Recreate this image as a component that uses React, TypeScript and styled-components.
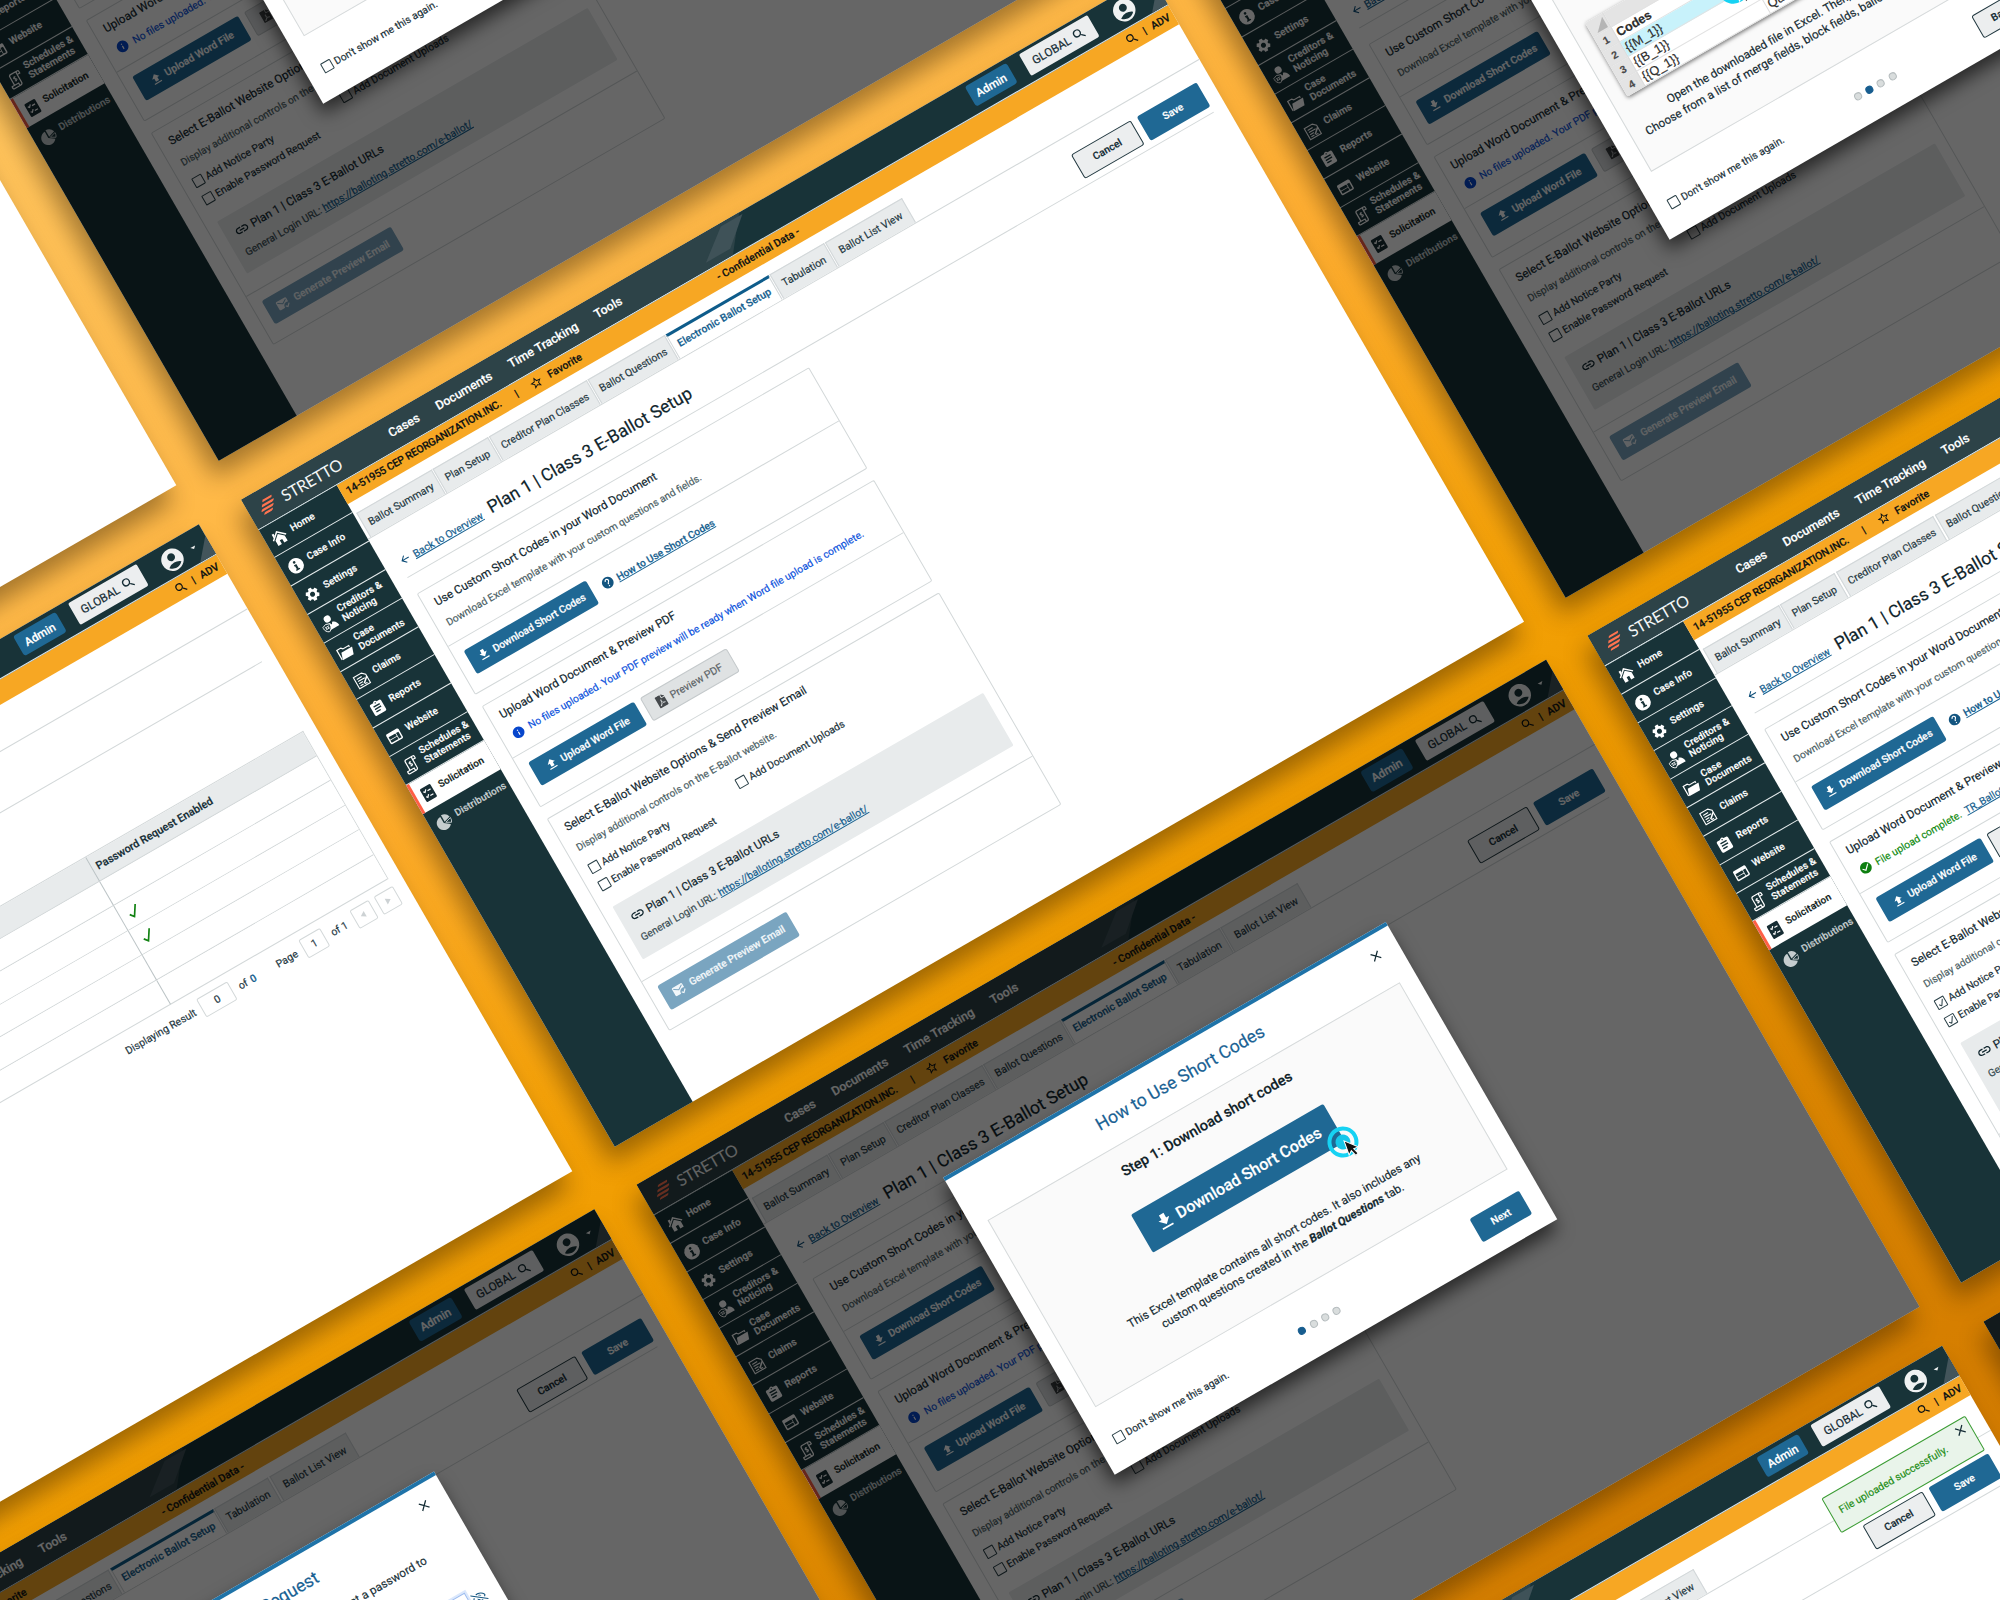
import React from 'react';
import styled, { createGlobalStyle, css } from 'styled-components';
import {
  MdFileDownload, MdFileUpload, MdHelp, MdCheckCircle, MdInfo, MdAccountCircle, MdStarBorder,
  MdSearch, MdLink, MdMarkEmailRead, MdSettings, MdAssignment, MdWeb, MdArrowBack,
  MdClose, MdArrowDropDown, MdPlayArrow,
} from 'react-icons/md';
import { FaFilePdf, FaRegEyeSlash } from 'react-icons/fa';

const c = {
  ink: '#132b34',
  soft: '#4c5f65',
  line: '#d3d8d9',
  blue: '#1f6894',
  link: '#155e8e',
  amber: '#f7a723',
  side: '#183338',
  grey: '#e8ebec',
};

const Global = createGlobalStyle`
  html, body { margin: 0; padding: 0; }
  body {
    overflow: hidden;
    font-family: Roboto, "Liberation Sans", sans-serif;
    color: ${c.ink};
    -webkit-text-stroke: 0.18px currentColor;
  }
  *, *::before, *::after { box-sizing: border-box; }
`;

const Stage = styled.div`
  width: 2000px;
  height: 1600px;
  overflow: hidden;
  background: linear-gradient(150deg, #ffc660 0%, #ffbb4c 20%, #ffae30 36%, #f5a20a 51%, #f19e03 56%, #dd8700 77%, #d67f00 89%, #d27a00 100%);
`;

const Board = styled.div`
  display: grid;
  grid-template-columns: repeat(3, 1050px);
  grid-template-rows: repeat(4, 747px);
  column-gap: 48.5px;
  row-gap: 44.5px;
  width: 3248px;
  transform-origin: 0 0;
  transform: translate(-1106.5px, 363.4px) rotate(-30deg);
`;

const Frame = styled.section<{ $col: number; $row: number }>`
  grid-column: ${(p) => p.$col};
  grid-row: ${(p) => p.$row};
  position: relative;
  display: flex;
  flex-direction: column;
  background: #fff;
  box-shadow: -11px 13px 24px rgba(40, 25, 0, 0.42);
`;

const Dim = styled.div`
  position: absolute;
  inset: 0;
  background: rgba(0, 0, 0, 0.6);
`;

/* ---------- header ---------- */

const Header = styled.header`
  position: relative;
  display: flex;
  align-items: center;
  height: 35px;
  flex: none;
  border-bottom: 1px solid #dfe9ec;
  background: ${c.side};
`;

const HeaderArt = styled.svg`
  position: absolute;
  inset: 0;
  width: 1050px;
  height: 34px;
`;

const Brand = styled.div`
  position: relative;
  display: flex;
  align-items: center;
  gap: 8px;
  width: 161.5px;
  padding: 1px 0 0 11px;
  font-family: Lato, sans-serif;
  font-weight: 400;
  font-size: 16.2px;
  letter-spacing: -0.25px;
  color: #f3f6f6;
  -webkit-text-stroke: 0;
  svg { width: 18.5px; height: 15px; }
`;

const Nav = styled.nav`
  position: relative;
  display: flex;
  gap: 20.4px;
  flex: 1;
  font-size: 12.4px;
  font-weight: 500;
  color: #fff;
`;

const HeaderActions = styled.div`
  position: relative;
  display: flex;
  align-items: center;
  margin-top: -2px;
`;

const AdminButton = styled.div`
  width: 48.5px;
  height: 23.5px;
  border-radius: 3px;
  background: ${c.blue};
  color: #fff;
  font-size: 11.7px;
  font-weight: 500;
  display: flex;
  align-items: center;
  justify-content: center;
`;

const GlobalButton = styled.div`
  display: flex;
  align-items: center;
  justify-content: center;
  gap: 3px;
  width: 79px;
  height: 24.5px;
  margin-left: 15px;
  border-radius: 2px;
  background: #eceeef;
  color: ${c.ink};
  font-size: 11.7px;
  svg { width: 15px; height: 15px; }
`;

const Avatar = styled.div`
  display: flex;
  align-items: center;
  margin: 3px 10px 0 20.5px;
  color: #f0f2f2;
  > svg:first-child { width: 27px; height: 27px; }
  > svg:last-child { width: 13px; height: 13px; margin-left: 4px; }
`;

const Body = styled.div`
  display: flex;
  flex: 1;
`;

/* ---------- sidebar ---------- */

const Side = styled.aside`
  width: 90px;
  flex: none;
  background: ${c.side};
`;

const SideItem = styled.div<{ $active?: boolean; $muted?: boolean }>`
  display: flex;
  align-items: center;
  height: 32.84px;
  border-bottom: 1px solid #e6eced;
  font-size: 9.9px;
  line-height: 10.6px;
  font-weight: 500;
  letter-spacing: 0.12px;
  white-space: pre;
  color: #fff;
  svg { width: 17px; height: 17px; margin: 3px 6px 0 6px; flex: none; }
  ${(p) => p.$active && css`
    background: #fff;
    color: #101c20;
    border-bottom: 0;
    border-left: 3px solid #ff5f45;
    svg { margin-left: 4px; margin-right: 5px; }
  `}
  ${(p) => p.$muted && css`
    border-bottom: 0;
    color: #c5cdcf;
  `}
`;

/* ---------- main area ---------- */

const Main = styled.main`
  flex: 1;
  display: flex;
  flex-direction: column;
  min-width: 0;
`;

const CaseBar = styled.div`
  display: grid;
  grid-template-columns: 1fr auto 1fr;
  align-items: center;
  height: 22px;
  padding: 0 4px 0 6px;
  background: ${c.amber};
  color: #0d1214;
  font-size: 10.6px;
  font-weight: 500;
`;

const CaseLeft = styled.div`
  display: flex;
  align-items: center;
  svg { width: 14px; height: 14px; margin: 0 7px 0 14.5px; }
`;

const CaseName = styled.span`
  font-size: 10.7px;
  letter-spacing: -0.2px;
  width: 194.5px;
`;

const CaseRight = styled.div`
  display: flex;
  align-items: center;
  justify-content: flex-end;
  gap: 6.5px;
  svg { width: 14px; height: 14px; }
`;

const Tabs = styled.div`
  display: flex;
  gap: 1.4px;
  height: 29px;
  margin-top: 12px;
  padding-left: 3px;
  border-bottom: 1px solid ${c.line};
`;

const Tab = styled.div<{ $w: number; $active?: boolean }>`
  width: ${(p) => p.$w}px;
  display: flex;
  align-items: center;
  justify-content: center;
  border: 1px solid #d2d7d9;
  border-bottom: 0;
  background: ${c.grey};
  font-size: 10.5px;
  white-space: nowrap;
  color: #1e373f;
  ${(p) => p.$active && css`
    background: #fff;
    border-top: 3px solid #0e5c8b;
    font-weight: 500;
    color: #165f8f;
    padding-bottom: 2px;
  `}
`;

const Head = styled.div`
  display: flex;
  align-items: flex-start;
  height: 53px;
  margin: 0 14px 0 15.5px;
  padding-top: 18.5px;
  border-bottom: 1px solid ${c.line};
`;

const BackLink = styled.a`
  display: flex;
  align-items: center;
  gap: 3.5px;
  height: 30px;
  margin: 2px 8.5px 0 1px;
  font-size: 10.4px;
  color: ${c.link};
  span { text-decoration: underline; }
  svg { width: 12.5px; height: 12.5px; color: #0d4d78; }
`;

const PageTitle = styled.h1`
  flex: 1;
  margin: 0;
  font-size: 17.6px;
  line-height: 30px;
  font-weight: 400;
  color: #10252c;
`;

type Tone = 'primary' | 'outline' | 'disabled' | 'faded';

const Button = styled.div<{ $w: number; $h?: number; $tone?: Tone }>`
  display: flex;
  align-items: center;
  justify-content: center;
  gap: 4px;
  width: ${(p) => p.$w}px;
  height: ${(p) => p.$h ?? 27.5}px;
  border-radius: 2.5px;
  font-size: 10.35px;
  font-weight: 500;
  white-space: nowrap;
  background: ${c.blue};
  color: #fff;
  svg { width: 14px; height: 14px; }
  ${(p) => p.$tone === 'outline' && css`
    background: #eceeef;
    border: 1px solid #20373f;
    color: ${c.ink};
  `}
  ${(p) => p.$tone === 'disabled' && css`
    background: #dfe2e3;
    border: 1px solid #c4c9cb;
    color: #5c6366;
    font-size: 10.6px;
    font-weight: 400;
    gap: 5px;
    svg { width: 11px; height: 12.5px; color: #45494c; }
  `}
  ${(p) => p.$tone === 'faded' && css`
    background: #7aa5c0;
    color: #f1f6f9;
    gap: 6px;
  `}
`;

const ButtonRow = styled.div`
  display: flex;
  align-items: center;
  gap: 7px;
`;

const Card = styled.div<{ $h: number; $gap: number }>`
  width: 453px;
  height: ${(p) => p.$h}px;
  margin: ${(p) => p.$gap}px 0 0 15.5px;
  border: 1px solid ${c.line};
  border-radius: 2px;
`;

const CardTop = styled.div<{ $h: number }>`
  height: ${(p) => p.$h}px;
  padding: 6px 11px 0 10.5px;
  border-bottom: 1px solid ${c.line};
`;

const CardFoot = styled.div`
  padding: 11px 11px;
`;

const CardTitle = styled.h2`
  margin: 0;
  font-size: 11.7px;
  line-height: 20px;
  font-weight: 400;
  color: #10262e;
`;

const Hint = styled.p`
  margin: 4.5px 0 0;
  font-size: 10.25px;
  line-height: 20px;
  color: ${c.soft};
`;

const Notice = styled.div<{ $ok?: boolean }>`
  display: flex;
  align-items: center;
  gap: 5px;
  height: 20px;
  margin-top: 4px;
  padding-left: 0.5px;
  font-size: 10.28px;
  white-space: nowrap;
  color: ${(p) => (p.$ok ? '#0f8a10' : '#0c52dc')};
  svg { width: 14px; height: 14px; color: ${(p) => (p.$ok ? '#0d7f10' : '#0746cc')}; }
`;

const Anchor = styled.a`
  color: ${c.link};
  text-decoration: underline;
`;

const HelpLink = styled.div`
  display: flex;
  align-items: center;
  gap: 4px;
  margin-left: 3.5px;
  font-size: 10.25px;
  font-weight: 500;
  svg { width: 14px; height: 14px; color: #135580; }
`;

const CheckRow = styled.div<{ $top?: number }>`
  display: flex;
  align-items: center;
  height: 20px;
  margin-top: ${(p) => p.$top ?? 0}px;
  font-size: 10.35px;
  color: #1a3139;
`;

const BoxMark = styled.span`
  display: inline-flex;
  align-items: center;
  justify-content: center;
  width: 11px;
  height: 11px;
  border: 1px solid #2b4148;
  border-radius: 1px;
  svg { width: 7.5px; height: 7.5px; }
`;

const Cell = styled.div<{ $w: number }>`
  display: flex;
  align-items: center;
  gap: 3.5px;
  width: ${(p) => p.$w}px;
`;

const UrlBox = styled.div<{ $tall?: boolean }>`
  height: ${(p) => (p.$tall ? 80 : 60.5)}px;
  margin: 14px 0 0 1.5px;
  width: 428px;
  padding: 9px 9.5px;
  background: ${c.grey};
  border-radius: 1.5px;
`;

const UrlTitle = styled.div`
  display: flex;
  align-items: center;
  gap: 3px;
  height: 20px;
  font-size: 11.7px;
  color: #10262e;
  svg { width: 16px; height: 16px; }
`;

const UrlLine = styled.div`
  font-size: 10.3px;
  line-height: 20px;
  margin-top: 3px;
  color: #3a4e54;
`;

/* ---------- table page ---------- */

const TableTitle = styled.div`
  height: 80px;
`;

const Table = styled.div`
  display: grid;
  grid-template-columns: 679px 1fr;
  grid-template-rows: repeat(6, 28.45px);
  width: 931px;
  margin-left: 15.5px;
  border-top: 1px solid ${c.line};
  border-right: 1px solid ${c.line};
`;

const Td = styled.div<{ $head?: boolean; $last?: boolean }>`
  display: flex;
  align-items: center;
  border-bottom: 1px solid ${c.line};
  border-left: ${(p) => (p.$last ? '1px solid #bcc4c6' : '0')};
  padding-left: ${(p) => (p.$head ? 5 : 8)}px;
  background: ${(p) => (p.$head ? c.grey : '#fff')};
  font-size: 10.95px;
  font-weight: 500;
  svg { width: 12px; height: 13px; }
`;

const Pager = styled.div`
  display: flex;
  align-items: center;
  justify-content: flex-end;
  width: 946.5px;
  margin-top: 8px;
  font-size: 10.5px;
  color: #1e373f;
  b { font-weight: 500; color: ${c.link}; margin: 0 24px 0 4px; }
`;

const PagerBox = styled.span<{ $w: number; $ml: number; $mr: number; $flip?: boolean }>`
  display: flex;
  align-items: center;
  justify-content: center;
  width: ${(p) => p.$w}px;
  height: 21px;
  margin: 0 ${(p) => p.$mr}px 0 ${(p) => p.$ml}px;
  border: 1px solid ${c.line};
  border-radius: 2px;
  svg { width: 11px; height: 11px; color: #cdd2d4; transform: ${(p) => (p.$flip ? 'scaleX(-1)' : 'none')}; }
`;

/* ---------- modal ---------- */

const Modal = styled.div`
  position: absolute;
  left: 269px;
  top: 147px;
  width: 511px;
  height: 342.5px;
  display: flex;
  flex-direction: column;
  border-top: 4px solid #1f73a8;
  background: #fff;
  box-shadow: -5px 9px 18px rgba(0, 0, 0, 0.6);
`;

const Close = styled.div<{ $x: number; $y: number }>`
  position: absolute;
  left: ${(p) => p.$x}px;
  top: ${(p) => p.$y}px;
  display: flex;
  color: ${c.ink};
  svg { width: 15px; height: 15px; }
`;

const ModalTitle = styled.div`
  height: 55px;
  padding-top: 1.5px;
  display: flex;
  align-items: center;
  justify-content: center;
  font-size: 17.7px;
  color: #1a6294;
`;

const Panel = styled.div`
  height: 215.5px;
  margin: 0 17.5px 0 17.5px;
  border: 1px solid #d6dadb;
  background: #fafafa;
  display: flex;
  flex-direction: column;
  align-items: center;
`;

const StepTitle = styled.div`
  margin-top: 15px;
  font-size: 14.6px;
  line-height: 20px;
  font-weight: 500;
  color: #0f2127;
`;

const BigButton = styled.div`
  display: flex;
  align-items: center;
  justify-content: center;
  gap: 3px;
  width: 222px;
  height: 44px;
  margin: 31px 0 42px;
  border-radius: 2px;
  background: ${c.blue};
  color: #fff;
  font-size: 16.2px;
  font-weight: 500;
  svg { width: 21px; height: 21px; }
`;

const Copy = styled.div`
  font-size: 11.75px;
  line-height: 17.3px;
  text-align: center;
  white-space: pre;
  color: #152b32;
`;

const ModalFoot = styled.div`
  display: grid;
  grid-template-columns: 1fr auto 1fr;
  align-items: center;
  flex: 1;
  padding: 7.5px 18.5px 0 17px;
`;

const Dots = styled.div`
  display: flex;
  gap: 5.2px;
`;

const Dot = styled.span<{ $on: boolean }>`
  width: 8px;
  height: 8px;
  border-radius: 50%;
  border: 1px solid ${(p) => (p.$on ? '#175d8f' : '#b5bcbe')};
  background: ${(p) => (p.$on ? '#175d8f' : '#d9dddd')};
`;

const FootButtons = styled.div`
  display: flex;
  gap: 6px;
  justify-content: flex-end;
`;

const Pointer = styled.svg<{ $x: number; $y: number }>`
  position: absolute;
  left: ${(p) => p.$x}px;
  top: ${(p) => p.$y}px;
  width: 44px;
  height: 44px;
`;

const Sheet = styled.div`
  display: grid;
  grid-template-columns: 21px 145px 1fr;
  grid-template-rows: repeat(5, 17px);
  width: 441px;
  margin: 52px 0 15px;
  background: #fff;
  border-radius: 2px;
  box-shadow: 0 1.5px 4px rgba(0, 0, 0, 0.55);
  overflow: hidden;
  font-family: "Liberation Sans", sans-serif;
  font-size: 12.6px;
  color: #2c2c2c;
`;

const SheetCell = styled.div<{ $kind?: 'head' | 'num' | 'hot' | 'title' }>`
  display: flex;
  align-items: center;
  padding-left: 2px;
  border-right: 1px solid #dcdcdc;
  border-bottom: 1px solid #e2e2e2;
  ${(p) => (p.$kind === 'head' || p.$kind === 'num') && css`
    background: #e4e4e4;
    justify-content: center;
    padding: 0;
    font-size: 10.5px;
    font-weight: 700;
    color: #4a4a4a;
  `}
  ${(p) => p.$kind === 'hot' && css`background: #c8f2fb;`}
  ${(p) => p.$kind === 'title' && css`font-weight: 700;`}
`;

const SheetCorner = styled.span`
  width: 0;
  height: 0;
  border-left: 12px solid transparent;
  border-bottom: 12px solid #b5b5b5;
  margin: 2px 0 0 4px;
`;

const PasswordInput = styled.div`
  width: 160px;
  height: 26px;
  border: 1px solid #9cbcf0;
  box-shadow: 0 0 0 2px #dbe8fc;
  background: #fff;
`;

const PasswordRow = styled.div`
  display: flex;
  align-items: flex-start;
  justify-content: flex-end;
  gap: 3px;
  padding: 39px 16px 0 0;
  svg { width: 15px; height: 15px; margin-top: 4px; color: #135580; }
`;

const PasswordCopy = styled.div`
  margin-top: 3px;
  padding: 2px 51px 0 0;
  text-align: right;
  font-size: 11.75px;
  line-height: 17px;
  color: #1b3138;
`;

const Toast = styled.div`
  position: absolute;
  left: 869px;
  top: 72px;
  width: 166px;
  height: 40.5px;
  padding-left: 9.5px;
  display: flex;
  align-items: center;
  border: 1.3px solid #3a9c33;
  border-radius: 2px;
  background: #e9f4ea;
  color: #1f8e18;
  font-size: 10.4px;
`;

/* ---------- drawings ---------- */

const BrandMark = () => (
  <svg viewBox="0 0 37 30" fill="#ff7350">
    <path d="M12 5.500Q13.500 1 17 1H36Q34.500 5.500 30 5.500Z" />
    <path d="M6 14Q7.500 9.500 11 9.500H36Q34 14 30 14Z" />
    <path d="M1 21.800Q2.500 17.400 6 17.400H31Q29 21.800 25 21.800Z" />
    <path d="M3 29.500Q4.500 25.200 8 25.200H25Q23 29.500 19 29.500Z" />
  </svg>
);

const HomeIcon = () => (
  <svg viewBox="0 0 24 24" fill="#fff">
    <path d="M12 2 1 12l1.400 1.500L12 5l9.600 8.500L23 12z" />
    <path d="M4 3.500h3v3.300L4 9.500z" />
    <path d="M12 6.800 4.500 13.500V22H10v-6h4v6h5.500v-8.500z" />
  </svg>
);

const InfoIcon = () => (
  <svg viewBox="0 0 24 24">
    <circle cx="12" cy="12" r="11" fill="#fff" />
    <circle cx="12" cy="6.600" r="1.900" fill={c.side} />
    <path d="M9.500 10h4v7h1.500v1.800H9V17h1.500v-5.200h-1z" fill={c.side} />
  </svg>
);

const CreditorsIcon = () => (
  <svg viewBox="0 0 24 24">
    <circle cx="12.500" cy="6" r="5" fill="#fff" />
    <path d="M5 22c0-6 3-9.500 7.500-9.500l2 3.500 2-3.300c4 .8 6.500 4 6.500 9.300z" fill="#fff" />
    <path d="M1 13.500l5.500-2 5.500 2v1.500c0 4-2 6.500-5.500 8.500C3 21.500 1 19 1 15z" fill={c.side} stroke="#fff" strokeWidth="1.200" />
    <path d="M3 15.500h7M3.500 18.500h6M5 15.500v3M8 15.500v3" stroke="#fff" strokeWidth="1.100" fill="none" />
  </svg>
);

const FolderIcon = () => (
  <svg viewBox="0 0 24 24">
    <path d="M2 20V4.500h6.500l2 2.500H20v2" fill="none" stroke="#fff" strokeWidth="1.700" />
    <path d="M6 10.500h17.500L20 21H2.500z" fill="#fff" />
  </svg>
);

const ClaimsIcon = () => (
  <svg viewBox="0 0 24 24" fill="none" stroke="#fff" strokeWidth="1.600">
    <path d="M3 3h13l4.500 4.500v13.500H3z" />
    <path d="M6 7.500h8M6 11h11M6 14.500h6M6 18h5" />
    <path d="M12.500 17.500l8-7" strokeWidth="2.200" />
    <path d="M13 19c1.500-1.500 2 .5 4-.5" />
  </svg>
);

const ScheduleIcon = () => (
  <svg viewBox="0 0 24 24" fill="none" stroke="#fff" strokeWidth="1.700">
    <path d="M7 18V4.500C7 2.500 8 2 9.500 2H20c-1.800 0-2.300 1-2.300 3v14c0 2-1 3-2.700 3H4.500C3 22 2.500 20 3 18h10.500c-.3 2 .3 4 1.700 4" />
    <path d="M17.700 6.500H22V4c0-1.200-.8-2-2-2" />
    <path d="M14 8.200c-1-.9-3.400-.8-3.400.8 0 1.800 3.600.9 3.600 2.900 0 1.700-2.700 1.800-3.800.7M12.300 6.500v8" strokeWidth="1.300" />
  </svg>
);

const SolicitationIcon = () => (
  <svg viewBox="0 0 24 24">
    <rect x="3.500" y="1.500" width="17" height="21" rx="1.800" fill="#172d34" />
    <path d="M6.500 7l1.800 2 3-3.400M12.500 8.500h5M6.500 15l1.800 2 3-3.400M12.500 16.500h5" stroke="#fff" strokeWidth="1.700" fill="none" />
  </svg>
);

const PieIcon = () => (
  <svg viewBox="0 0 24 24">
    <path d="M11 3a10 10 0 1 0 8 16l-8-6z" fill="#c5cdcf" />
    <path d="M13 1.500A10.500 10.500 0 0 1 22.800 9L13 12z" fill="#c5cdcf" />
    <path d="M23 11a9.500 9.500 0 0 1-2 6.500L14 13.500z" fill="none" stroke="#c5cdcf" strokeWidth="1.200" />
  </svg>
);

const Tick = ({ color, width }: { color: string; width: number }) => (
  <svg viewBox="0 0 12 13" fill="none" stroke={color} strokeWidth={width}>
    <path d="M1 7.500 4.200 11.500 11 1" />
  </svg>
);

const ClickMark = ({ x, y }: { x: number; y: number }) => (
  <Pointer $x={x} $y={y} viewBox="0 0 44 44">
    <circle cx="18" cy="18" r="13.500" fill="none" stroke="#16d2f3" strokeWidth="4" />
    <circle cx="18" cy="18" r="7.500" fill="#16c6ea" />
    <path
      d="M19.500 17.500v15l3.500-3.200 2.700 6 2.800-1.300-2.600-5.700 4.800-.3z"
      transform="rotate(10 19.500 17.500)"
      fill="#111"
      stroke="#fff"
      strokeWidth="1"
    />
  </Pointer>
);

/* ---------- composition ---------- */

const sideItems = [
  { label: 'Home', icon: <HomeIcon /> },
  { label: 'Case Info', icon: <InfoIcon /> },
  { label: 'Settings', icon: <MdSettings /> },
  { label: 'Creditors &\nNoticing', icon: <CreditorsIcon /> },
  { label: 'Case\nDocuments', icon: <FolderIcon /> },
  { label: 'Claims', icon: <ClaimsIcon /> },
  { label: 'Reports', icon: <MdAssignment /> },
  { label: 'Website', icon: <MdWeb /> },
  { label: 'Schedules &\nStatements', icon: <ScheduleIcon /> },
  { label: 'Solicitation', icon: <SolicitationIcon />, active: true },
  { label: 'Distributions', icon: <PieIcon />, muted: true },
];

const tabs = [
  { label: 'Ballot Summary', w: 87.5 },
  { label: 'Plan Setup', w: 63.5 },
  { label: 'Creditor Plan Classes', w: 112.5 },
  { label: 'Ballot Questions', w: 88.5 },
  { label: 'Electronic Ballot Setup', w: 119 },
  { label: 'Tabulation', w: 62.5 },
  { label: 'Ballot List View', w: 88.5 },
];

interface ScreenProps {
  col: number;
  row: number;
  dim?: boolean;
  overlay?: React.ReactNode;
  children: React.ReactNode;
}

function Screen({ col, row, dim, overlay, children }: ScreenProps) {
  return (
    <Frame $col={col} $row={row}>
      <Header>
        <HeaderArt viewBox="0 0 1050 34">
          <path d="M0 0H575L548 34H0Z" fill="#2d4348" />
          <path d="M552 3H577L549 27H521Z" fill="#3f5258" />
          <path d="M1032 34L1050 13V34Z" fill="#43555b" />
        </HeaderArt>
        <Brand><BrandMark />STRETTO</Brand>
        <Nav>
          <span>Cases</span><span>Documents</span><span>Time Tracking</span><span>Tools</span>
        </Nav>
        <HeaderActions>
          <AdminButton>Admin</AdminButton>
          <GlobalButton>GLOBAL <MdSearch /></GlobalButton>
          <Avatar><MdAccountCircle /><MdArrowDropDown /></Avatar>
        </HeaderActions>
      </Header>
      <Body>
        <Side>
          {sideItems.map((it) => (
            <SideItem key={it.label} $active={it.active} $muted={it.muted}>{it.icon}{it.label}</SideItem>
          ))}
        </Side>
        <Main>
          <CaseBar>
            <CaseLeft>
              <CaseName>14-51955 CEP REORGANIZATION.INC.</CaseName>|<MdStarBorder />Favorite
            </CaseLeft>
            <span>- Confidential Data -</span>
            <CaseRight><MdSearch /><span>|</span><span>ADV</span></CaseRight>
          </CaseBar>
          <Tabs>
            {tabs.map((t) => (
              <Tab key={t.label} $w={t.w} $active={t.label === 'Electronic Ballot Setup'}>{t.label}</Tab>
            ))}
          </Tabs>
          {children}
        </Main>
      </Body>
      {dim && <Dim />}
      {overlay}
    </Frame>
  );
}

const Check = ({ label, on, w }: { label: string; on?: boolean; w: number }) => (
  <Cell $w={w}>
    <BoxMark>{on && <Tick color="#2b4148" width={1.8} />}</BoxMark>
    {label}
  </Cell>
);

function SetupPage({ uploaded }: { uploaded?: boolean }) {
  return (
    <>
      <Head>
        <BackLink><MdArrowBack /><span>Back to Overview</span></BackLink>
        <PageTitle>Plan 1 | Class 3 E-Ballot Setup</PageTitle>
        <ButtonRow>
          <Button $w={68.5} $tone="outline">Cancel</Button>
          <Button $w={69}>Save</Button>
        </ButtonRow>
      </Head>
      <Card $h={117} $gap={18}>
        <CardTop $h={61}>
          <CardTitle>Use Custom Short Codes in your Word Document</CardTitle>
          <Hint>Download Excel template with your custom questions and fields.</Hint>
        </CardTop>
        <CardFoot>
          <ButtonRow>
            <Button $w={141}><MdFileDownload />Download Short Codes</Button>
            <HelpLink><MdHelp /><Anchor>How to Use Short Codes</Anchor></HelpLink>
          </ButtonRow>
        </CardFoot>
      </Card>
      <Card $h={117} $gap={13}>
        <CardTop $h={60}>
          <CardTitle>Upload Word Document &amp; Preview PDF</CardTitle>
          {uploaded ? (
            <Notice $ok><MdCheckCircle />File upload complete. <Anchor>TR_Ballot_Template.docx</Anchor></Notice>
          ) : (
            <Notice><MdInfo />No files uploaded. Your PDF preview will be ready when Word file upload is complete.</Notice>
          )}
        </CardTop>
        <CardFoot>
          <ButtonRow>
            <Button $w={121.5}><MdFileUpload />Upload Word File</Button>
            <Button $w={100} $tone={uploaded ? 'outline' : 'disabled'}><FaFilePdf />Preview PDF</Button>
          </ButtonRow>
        </CardFoot>
      </Card>
      <Card $h={uploaded ? 264 : 245} $gap={13}>
        <CardTop $h={uploaded ? 207.5 : 188.5}>
          <CardTitle>Select E-Ballot Website Options &amp; Send Preview Email</CardTitle>
          <Hint>Display additional controls on the E-Ballot website.</Hint>
          <CheckRow $top={4}>
            <Check label="Add Notice Party" on={uploaded} w={170.5} />
            <Check label="Add Document Uploads" w={140} />
          </CheckRow>
          <CheckRow>
            <Check label="Enable Password Request" on={uploaded} w={170.5} />
          </CheckRow>
          <UrlBox $tall={uploaded}>
            <UrlTitle><MdLink />Plan 1 | Class 3 E-Ballot URLs</UrlTitle>
            <UrlLine>General Login URL: <Anchor>https://balloting.stretto.com/e-ballot/</Anchor></UrlLine>
            {uploaded && <UrlLine>Admin Login URL: <Anchor>https://balloting.stretto.com/admin/</Anchor></UrlLine>}
          </UrlBox>
        </CardTop>
        <CardFoot>
          <Button $w={149} $tone="faded"><MdMarkEmailRead />Generate Preview Email</Button>
        </CardFoot>
      </Card>
    </>
  );
}

function TablePage() {
  return (
    <>
      <Head />
      <TableTitle />
      <Table>
        <Td $head /><Td $head $last>Password Request Enabled</Td>
        {[false, true, true, false, false].map((on, i) => (
          <React.Fragment key={i}>
            <Td />
            <Td $last>{on && <Tick color="#128212" width={1.7} />}</Td>
          </React.Fragment>
        ))}
      </Table>
      <Pager>
        Displaying Result
        <PagerBox $w={36} $ml={7} $mr={7}>0</PagerBox>
        of <b>0</b>
        Page
        <PagerBox $w={25.5} $ml={7} $mr={7}>1</PagerBox>
        of 1
        <PagerBox $w={22} $ml={8} $mr={6} $flip><MdPlayArrow /></PagerBox>
        <PagerBox $w={22} $ml={0} $mr={0}><MdPlayArrow /></PagerBox>
      </Pager>
    </>
  );
}

function StepsModal({ step, children }: { step: number; children: React.ReactNode }) {
  return (
    <Modal>
      <Close $x={478} $y={13}><MdClose /></Close>
      <ModalTitle>How to Use Short Codes</ModalTitle>
      <Panel>{children}</Panel>
      <ModalFoot>
        <CheckRow><Check label="Don't show me this again." w={150} /></CheckRow>
        <Dots>{[1, 2, 3, 4].map((n) => <Dot key={n} $on={n === step} />)}</Dots>
        <FootButtons>
          {step > 1 && <Button $w={57} $h={26.5} $tone="outline">Back</Button>}
          <Button $w={57} $h={26.5}>Next</Button>
        </FootButtons>
      </ModalFoot>
    </Modal>
  );
}

const StepOne = () => (
  <StepsModal step={1}>
    <StepTitle>Step 1: Download short codes</StepTitle>
    <BigButton><MdFileDownload />Download Short Codes</BigButton>
    <Copy>
      {'This Excel template contains all short codes. It also includes any\ncustom questions created in the '}
      <b><i>Ballot Questions</i></b> tab.
    </Copy>
    <ClickMark x={346} y={146.5} />
  </StepsModal>
);

const sheetRows = [
  { text: 'Codes', kind: 'title' as const },
  { text: '{{M_1}}', kind: 'hot' as const },
  { text: '{{B_1}}', kind: undefined },
  { text: '{{Q_1}}', kind: undefined },
];

const StepTwo = ({ step = 2 }: { step?: number }) => (
  <StepsModal step={step}>
    <Sheet>
      <SheetCell $kind="head"><SheetCorner /></SheetCell>
      <SheetCell $kind="head">A</SheetCell>
      <SheetCell $kind="head">B</SheetCell>
      {sheetRows.map((r, i) => (
        <React.Fragment key={r.text}>
          <SheetCell $kind="num">{i + 1}</SheetCell>
          <SheetCell $kind={r.kind}>{r.text}</SheetCell>
          <SheetCell>{i === 3 ? 'Question 1' : ''}</SheetCell>
        </React.Fragment>
      ))}
    </Sheet>
    <Copy>
      {'Open the downloaded file in Excel. Then, copy the short codes you need.\nChoose from a list of merge fields, block fields, ballot questions or custom questions.'}
    </Copy>
    <ClickMark x={163} y={134} />
  </StepsModal>
);

const PasswordModal = () => (
  <Modal>
    <Close $x={478} $y={13}><MdClose /></Close>
    <ModalTitle>Enable Password Request</ModalTitle>
    <PasswordCopy>Creditors without a password can request a password to</PasswordCopy>
    <PasswordRow><PasswordInput /><FaRegEyeSlash /></PasswordRow>
  </Modal>
);

const SuccessToast = () => (
  <Toast>
    File uploaded successfully.
    <Close $x={146.5} $y={2.5}><MdClose /></Close>
  </Toast>
);

export default function App() {
  return (
    <>
      <Global />
      <Stage>
        <Board>
          <Screen col={1} row={1}><SetupPage /></Screen>
          <Screen col={1} row={2}><TablePage /></Screen>
          <Screen col={1} row={3} dim overlay={<PasswordModal />}><SetupPage /></Screen>
          <Screen col={2} row={1} dim overlay={<StepTwo step={3} />}><SetupPage /></Screen>
          <Screen col={2} row={2}><SetupPage /></Screen>
          <Screen col={2} row={3} dim overlay={<StepOne />}><SetupPage /></Screen>
          <Screen col={2} row={4} overlay={<SuccessToast />}><SetupPage uploaded /></Screen>
          <Screen col={3} row={2} dim overlay={<StepTwo />}><SetupPage /></Screen>
          <Screen col={3} row={3}><SetupPage uploaded /></Screen>
          <Screen col={3} row={4} dim><SetupPage uploaded /></Screen>
        </Board>
      </Stage>
    </>
  );
}
